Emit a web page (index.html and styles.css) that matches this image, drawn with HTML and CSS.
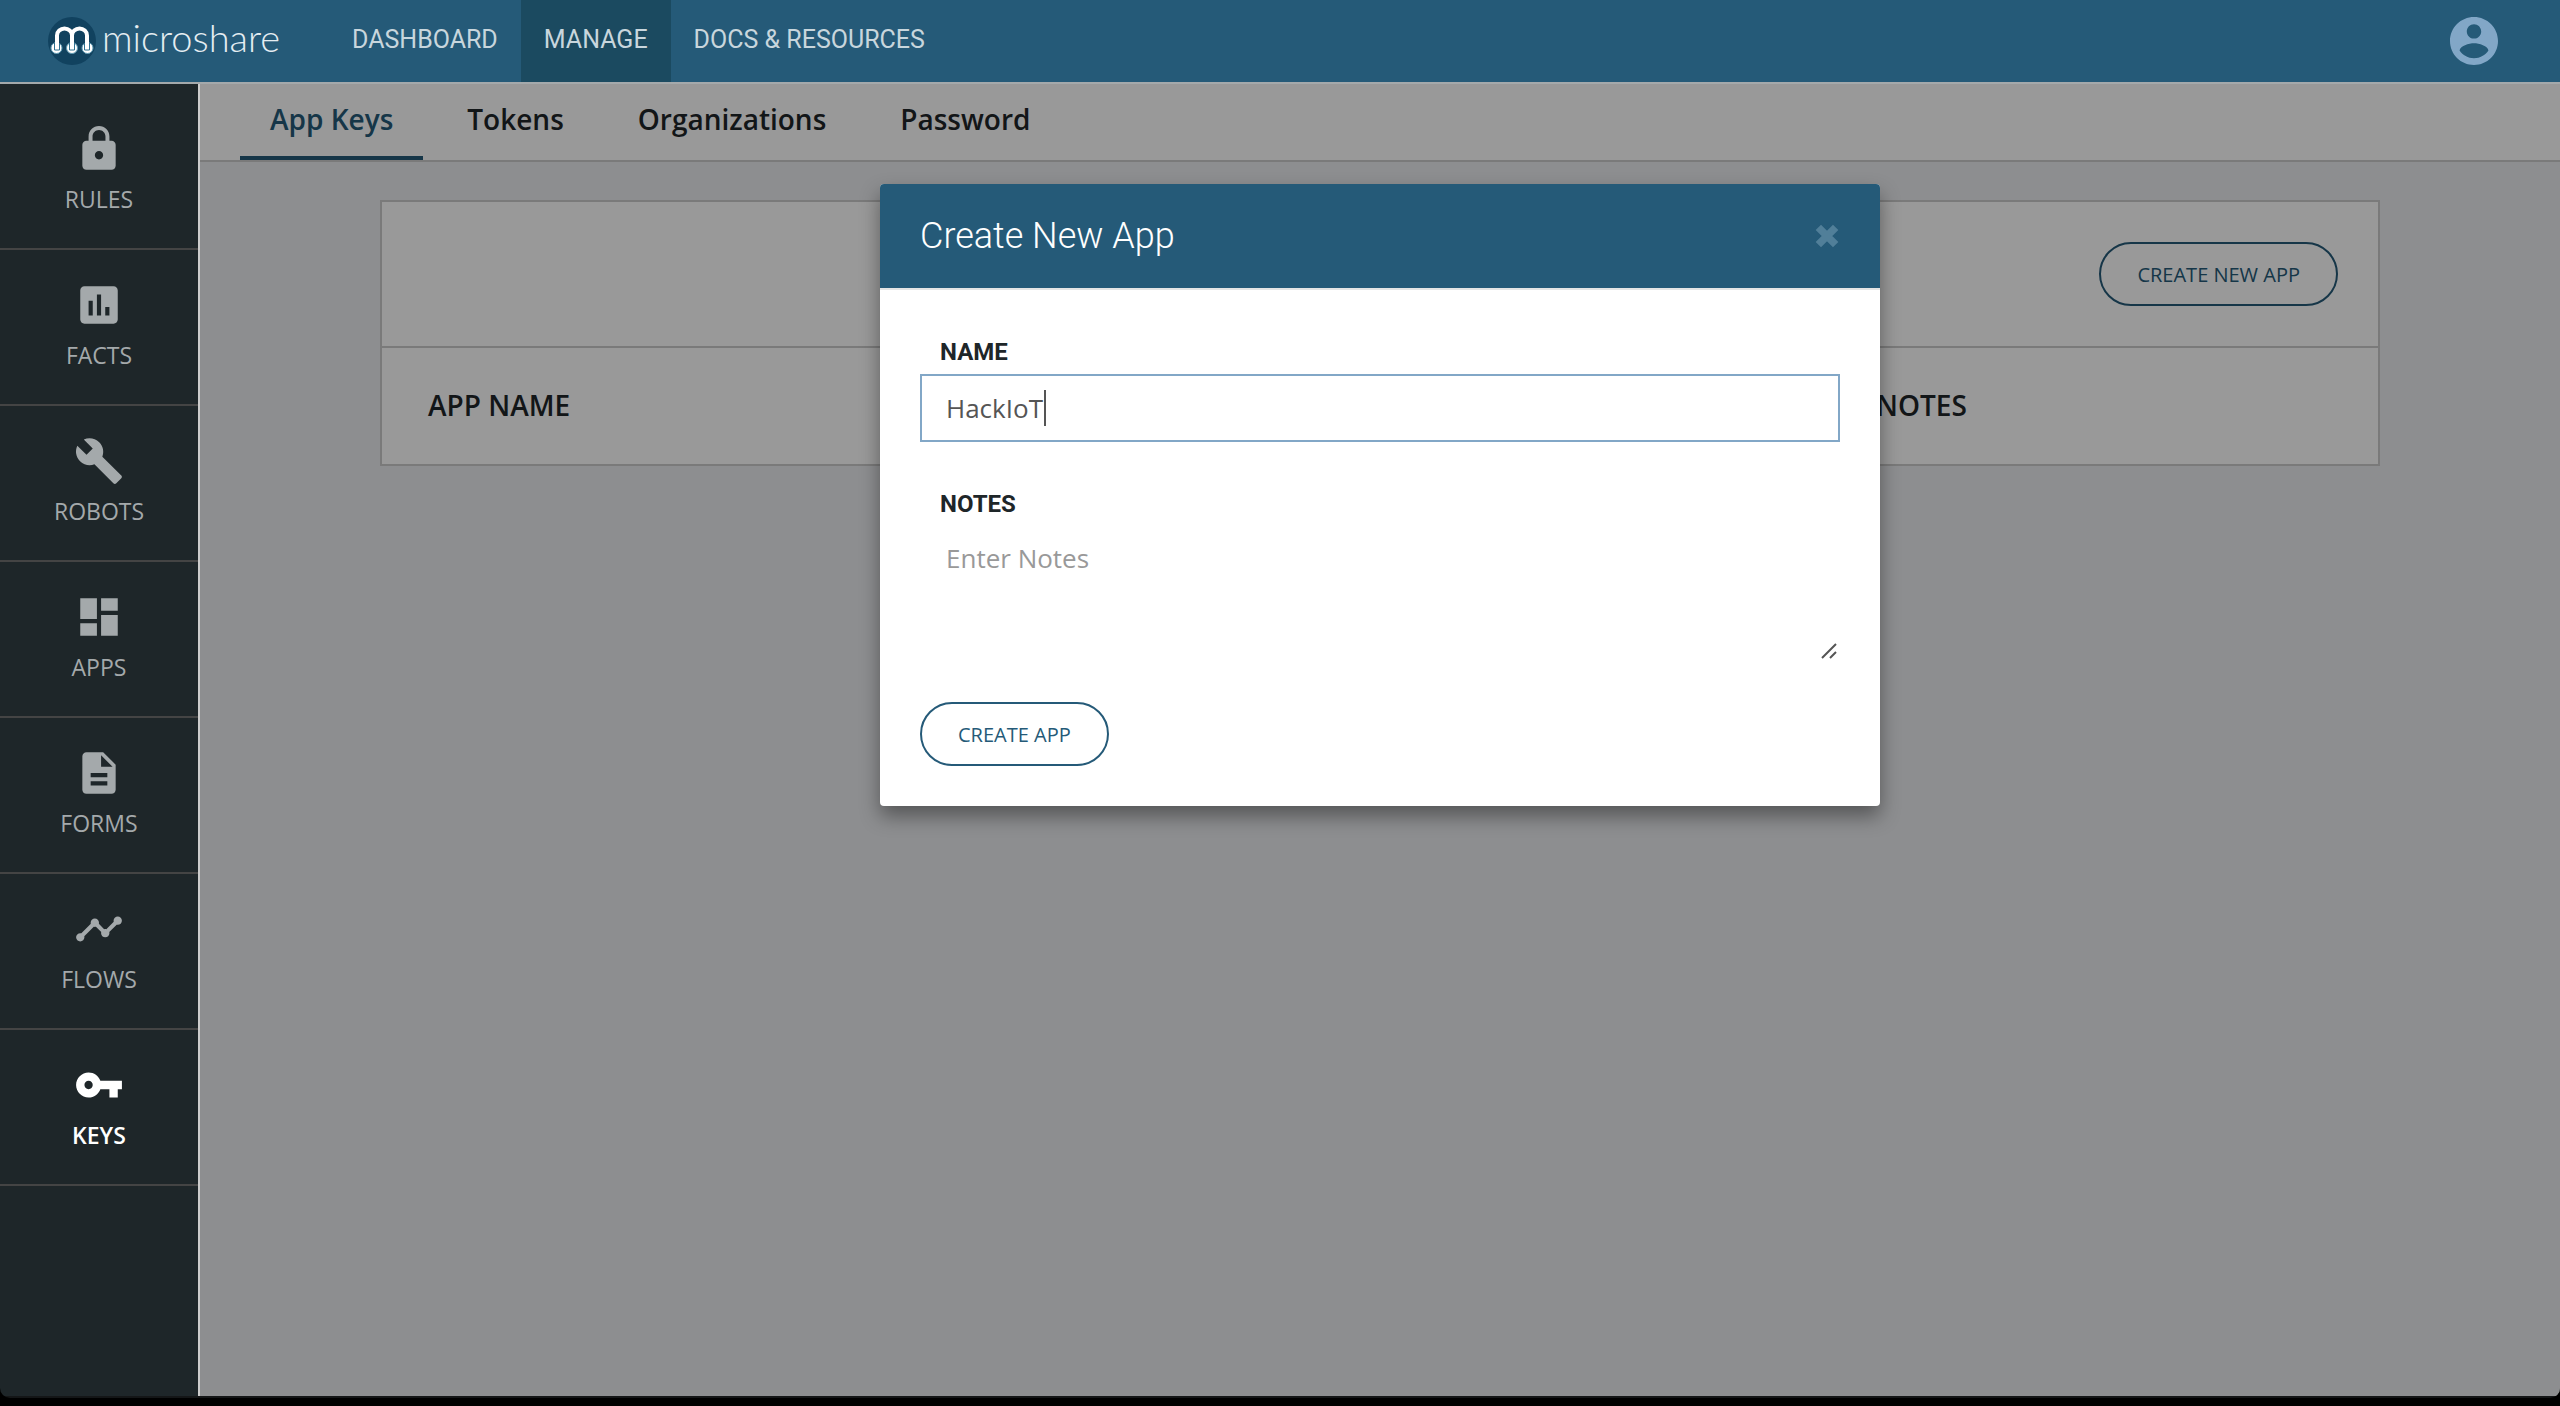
FILE: index.html
```html
<!DOCTYPE html>
<html lang="en">
<head>
<meta charset="utf-8">
<title>Microshare – App Keys</title>
<link rel="stylesheet" href="styles.css">
</head>
<body>
<div class="app">
  <header class="topbar">
    <a class="brand" href="#">
      <svg class="brand-mark" viewBox="0 0 48 48" aria-hidden="true">
        <circle cx="24" cy="24" r="24" fill="#11425f"/>
        <g fill="#fff" stroke="#5f9ab3" stroke-width="1">
          <circle cx="8.500" cy="31" r="5.500"/>
          <circle cx="24" cy="31" r="5.500"/>
          <circle cx="39.500" cy="31" r="5.500"/>
        </g>
        <path d="M9 32V18.500a7.500 7 0 0 1 15 0V32M24 18.500a7.500 7 0 0 1 15 0V32" fill="none" stroke="#fff" stroke-width="4"/>
        <path d="M6.500 26v7h5v-7M21.500 26v7h5v-7M36.500 26v7h5v-7" fill="none" stroke="#2f7291" stroke-width="1"/>
      </svg>
      <span class="brand-name">microshare</span>
    </a>
    <nav class="topnav" aria-label="Primary">
      <a class="topnav-link" href="#">DASHBOARD</a>
      <a class="topnav-link is-active" href="#">MANAGE</a>
      <a class="topnav-link" href="#">DOCS &amp; RESOURCES</a>
    </nav>
    <button class="account" type="button" aria-label="Account">
      <svg class="account-icon" viewBox="2 2 20 20" aria-hidden="true"><path d="M12 2C6.480 2 2 6.480 2 12s4.480 10 10 10 10-4.480 10-10S17.520 2 12 2zm0 3c1.660 0 3 1.340 3 3s-1.340 3-3 3-3-1.340-3-3 1.340-3 3-3zm0 14.200c-2.500 0-4.710-1.280-6-3.220.030-1.990 4-3.080 6-3.080 1.990 0 5.970 1.090 6 3.080-1.290 1.940-3.500 3.220-6 3.220z"/></svg>
    </button>
  </header>

  <div class="body">
    <nav class="sidebar" aria-label="Sections">
      <a class="side-link" href="#">
        <svg class="side-icon" viewBox="0 0 24 24" aria-hidden="true"><path d="M18 8h-1V6c0-2.760-2.240-5-5-5S7 3.240 7 6v2H6c-1.100 0-2 .900-2 2v10c0 1.100.900 2 2 2h12c1.100 0 2-.900 2-2V10c0-1.100-.900-2-2-2zm-6 9c-1.100 0-2-.900-2-2s.900-2 2-2 2 .900 2 2-.900 2-2 2zm3.100-9H8.900V6c0-1.710 1.390-3.100 3.100-3.100 1.710 0 3.100 1.390 3.100 3.100v2z"/></svg>
        RULES
      </a>
      <a class="side-link" href="#">
        <svg class="side-icon" viewBox="0 0 24 24" aria-hidden="true"><path d="M19 3H5c-1.100 0-2 .900-2 2v14c0 1.100.900 2 2 2h14c1.100 0 2-.900 2-2V5c0-1.100-.900-2-2-2zM9 17H7v-7h2v7zm4 0h-2V7h2v10zm4 0h-2v-4h2v4z"/></svg>
        FACTS
      </a>
      <a class="side-link" href="#">
        <svg class="side-icon" viewBox="0 0 24 24" aria-hidden="true"><path d="M22.700 19l-9.100-9.100c.900-2.300.400-5-1.500-6.900-2-2-5-2.400-7.400-1.300L9 6 6 9 1.600 4.700C.400 7.100.900 10.100 2.900 12.100c1.900 1.900 4.600 2.400 6.900 1.500l9.100 9.100c.400.400 1 .400 1.400 0l2.300-2.300c.500-.400.500-1.100.100-1.400z"/></svg>
        ROBOTS
      </a>
      <a class="side-link" href="#">
        <svg class="side-icon" viewBox="0 0 24 24" aria-hidden="true"><path d="M3 13h8V3H3v10zm0 8h8v-6H3v6zm10 0h8V11h-8v10zm0-18v6h8V3h-8z"/></svg>
        APPS
      </a>
      <a class="side-link" href="#">
        <svg class="side-icon" viewBox="0 0 24 24" aria-hidden="true"><path d="M14 2H6c-1.100 0-1.990.900-1.990 2L4 20c0 1.100.890 2 1.990 2H18c1.100 0 2-.900 2-2V8l-6-6zm2 16H8v-2h8v2zm0-4H8v-2h8v2zm-3-5V3.500L18.500 9H13z"/></svg>
        FORMS
      </a>
      <a class="side-link" href="#">
        <svg class="side-icon" viewBox="0 0 24 24" aria-hidden="true"><path d="M23 8c0 1.100-.900 2-2 2-.180 0-.350-.020-.510-.070l-3.560 3.550c.050.160.070.340.070.520 0 1.100-.900 2-2 2s-2-.900-2-2c0-.180.020-.360.070-.520l-2.550-2.550c-.160.050-.340.070-.520.070s-.360-.020-.520-.070l-4.550 4.560c.050.160.070.330.070.510 0 1.100-.900 2-2 2s-2-.900-2-2 .900-2 2-2c.180 0 .350.020.510.070l4.560-4.550C8.020 9.360 8 9.180 8 9c0-1.100.900-2 2-2s2 .900 2 2c0 .180-.020.360-.070.520l2.550 2.550c.160-.050.340-.070.520-.070s.360.020.520.070l3.550-3.560C19.020 8.350 19 8.180 19 8c0-1.100.900-2 2-2s2 .900 2 2z"/></svg>
        FLOWS
      </a>
      <a class="side-link is-active" href="#">
        <svg class="side-icon" viewBox="0 0 24 24" aria-hidden="true"><path d="M12.650 10C11.830 7.670 9.610 6 7 6c-3.310 0-6 2.690-6 6s2.690 6 6 6c2.610 0 4.830-1.670 5.650-4H17v4h4v-4h2v-4H12.650zM7 14c-1.100 0-2-.900-2-2s.900-2 2-2 2 .900 2 2-.900 2-2 2z"/></svg>
        KEYS
      </a>
    </nav>

    <main class="main">
      <nav class="tabs" aria-label="Key settings">
        <a class="tab is-active" href="#">App Keys</a>
        <a class="tab" href="#">Tokens</a>
        <a class="tab" href="#">Organizations</a>
        <a class="tab" href="#">Password</a>
      </nav>
      <section class="content">
        <div class="card">
          <div class="card-toolbar">
            <button class="pill" type="button">CREATE NEW APP</button>
          </div>
          <table class="keys">
            <thead>
              <tr><th class="col-name" scope="col">APP NAME</th><th scope="col">NOTES</th></tr>
            </thead>
          </table>
        </div>
      </section>

      <div class="overlay">
        <div class="modal" role="dialog" aria-modal="true" aria-labelledby="modal-title">
          <div class="modal-head">
            <h2 class="modal-title" id="modal-title">Create New App</h2>
            <button class="modal-close" type="button" aria-label="Close">
              <svg class="close-icon" viewBox="0 0 24 24" aria-hidden="true"><path d="M4 4l16 16M20 4L4 20"/></svg>
            </button>
          </div>
          <form class="modal-body">
            <label class="field-label" for="app-name">NAME</label>
            <div class="field">
              <input class="input" id="app-name" type="text" value="HackIoT">
              <span class="caret"></span>
            </div>
            <label class="field-label" for="app-notes">NOTES</label>
            <div class="field">
              <textarea class="input notes" id="app-notes" placeholder="Enter Notes"></textarea>
              <svg class="grip" viewBox="0 0 16 16" aria-hidden="true"><path d="M1 15L15 1M9 15l6-6"/></svg>
            </div>
            <button class="pill" type="button">CREATE APP</button>
          </form>
        </div>
      </div>
    </main>
  </div>
  <div class="edge"></div>
</div>
</body>
</html>
```

FILE: styles.css
```css
* {
  box-sizing: border-box;
}

body {
  margin: 0;
  background: #000;
  color: #1e2629;
  font-family: "Open Sans", "Noto Sans", sans-serif;
}

a {
  color: inherit;
  text-decoration: none;
}

button {
  padding: 0;
  border: 0;
  background: none;
  font-family: inherit;
}

.app {
  display: flex;
  flex-direction: column;
  height: calc(100vh - 8px);
  overflow: hidden;
  border-radius: 0 0 10px 10px;
}

/* Top bar */
.topbar {
  display: flex;
  flex: none;
  align-items: center;
  height: 84px;
  padding: 0 62px 0 48px;
  border-bottom: 2px solid #a4a9ab;
  background: #255a78;
}

.brand {
  display: flex;
  align-items: center;
  gap: 6px;
  width: 281px;
  color: #e4edf2;
}

.brand-mark {
  width: 48px;
  height: 48px;
}

.brand-name {
  padding-bottom: 8px;
  font: 300 38px/40px Lato, sans-serif;
}

.topnav {
  display: flex;
  flex: 1;
  align-self: stretch;
}

.topnav-link {
  padding: 0 23px;
  color: #c8d6dd;
  font: 400 25px/80px Roboto, sans-serif;
}

.topnav-link.is-active {
  background: #1b4a60;
}

.account-icon {
  display: block;
  width: 48px;
  height: 48px;
  fill: #82a7c7;
}

/* Sidebar */
.body {
  display: flex;
  flex: 1;
  min-height: 0;
}

.sidebar {
  flex: none;
  width: 200px;
  padding-top: 10px;
  border-right: 2px solid #ccc;
  background: #1e2629;
}

.side-link {
  display: flex;
  flex-direction: column;
  align-items: center;
  height: 156px;
  padding-top: 30px;
  border-bottom: 2px solid #444;
  color: #a4a9ab;
  font-size: 23px;
  font-weight: 500;
  line-height: 50px;
}

.side-icon {
  width: 50px;
  height: 50px;
  fill: currentColor;
}

.side-link.is-active {
  color: #fff;
  font-weight: 600;
}

/* Main column */
.main {
  position: relative;
  flex: 1;
  background: #ebedf0;
}

.tabs {
  display: flex;
  gap: 14px;
  height: 78px;
  padding: 0 40px;
  border-bottom: 2px solid #ccc;
  background: #fff;
}

.tab {
  padding: 0 30px;
  border-bottom: 4px solid transparent;
  font-size: 28px;
  font-weight: 600;
  line-height: 70px;
}

.tab.is-active {
  border-color: #255a78;
  color: #255a78;
}

.content {
  padding: 38px 180px;
}

.card {
  border: 2px solid #ccc;
  background: #fff;
}

.card-toolbar {
  display: flex;
  justify-content: flex-end;
  padding: 40px;
  border-bottom: 2px solid #ccc;
}

.pill {
  height: 64px;
  padding: 0 36px;
  border: 2px solid #255a78;
  border-radius: 32px;
  color: #255a78;
  font-size: 20px;
}

.keys {
  width: 100%;
  border-collapse: collapse;
}

.keys th {
  height: 116px;
  padding: 0 46px 2px;
  font-size: 28px;
  font-weight: 600;
  text-align: left;
}

.keys .col-name {
  width: 1448px;
}

/* Dialog */
.overlay {
  position: absolute;
  inset: 0;
  display: flex;
  align-items: flex-start;
  justify-content: center;
  padding-top: 100px;
  background: rgba(0, 0, 0, 0.4);
}

.modal {
  width: 1000px;
  overflow: hidden;
  border-radius: 4px;
  background: #fff;
  box-shadow: 0 10px 20px rgba(0, 0, 0, 0.4);
}

.modal-head {
  display: flex;
  align-items: center;
  justify-content: space-between;
  height: 106px;
  padding: 0 40px;
  border-bottom: 2px solid #e5e5e5;
  background: #255a78;
}

.modal-title {
  margin: 0;
  color: #fff;
  font: 300 36px/48px Roboto, sans-serif;
}

.close-icon {
  display: block;
  width: 26px;
  height: 26px;
  stroke: #517f99;
  stroke-width: 7;
}

.modal-body {
  padding: 40px;
}

.field-label {
  display: block;
  padding: 0 20px;
  font: 700 24px/44px Roboto, sans-serif;
}

.field {
  position: relative;
  margin-bottom: 40px;
}

.input {
  display: block;
  width: 100%;
  height: 68px;
  padding: 0 24px;
  border: 2px solid #82a7c7;
  outline: 0;
  color: #555;
  font: 400 26px/36px "Open Sans", sans-serif;
}

.input::placeholder {
  color: #999;
  opacity: 1;
}

.notes {
  height: 136px;
  padding: 12px 24px;
  border-color: transparent;
  resize: none;
}

.caret {
  position: absolute;
  top: 16px;
  left: 124px;
  width: 2px;
  height: 36px;
  background: #555;
}

.grip {
  position: absolute;
  right: 3px;
  bottom: 3px;
  width: 16px;
  height: 16px;
  fill: none;
  stroke: #555;
  stroke-width: 2;
}

.edge {
  flex: none;
  height: 2px;
  background: #141617;
}
```
